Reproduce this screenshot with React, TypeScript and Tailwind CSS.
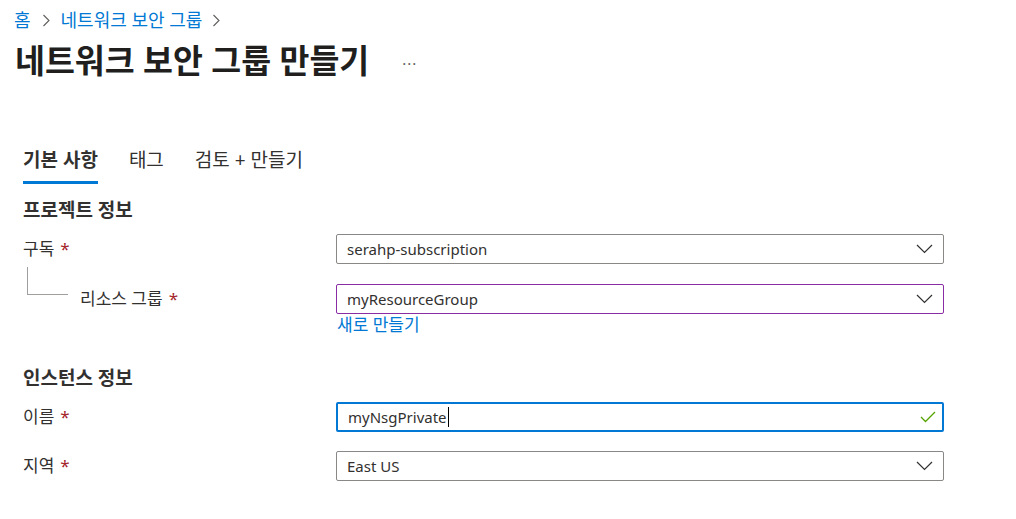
import React from "react";

const font = { fontFamily: '"Segoe UI", "Noto Sans", "Noto Sans CJK KR", sans-serif' };

function ChevronDown() {
  return (
    <svg width="17" height="10" viewBox="0 0 17 10" fill="none" className="shrink-0">
      <path d="M1 1 L8.5 8.5 L16 1" stroke="#323130" strokeWidth="1.2" />
    </svg>
  );
}

function ChevronRight() {
  return (
    <svg width="8" height="13" viewBox="0 0 8 13" fill="none" className="shrink-0">
      <path d="M1.5 1 L7 6.5 L1.5 12" stroke="#605e5c" strokeWidth="1.1" />
    </svg>
  );
}

function Check() {
  return (
    <svg width="16" height="12" viewBox="0 0 16 12" fill="none" className="shrink-0">
      <path d="M1 6 L5.5 10.5 L15 1" stroke="#57a300" strokeWidth="1.3" />
    </svg>
  );
}

function Required() {
  return <span className="ml-[6px] text-[#a4262c]">*</span>;
}

function Field({
  value,
  variant = "default",
  icon = "chevron",
}: {
  value: string;
  variant?: "default" | "purple" | "focus";
  icon?: "chevron" | "check";
}) {
  const border =
    variant === "purple"
      ? "border border-[#8a2da5]"
      : variant === "focus"
      ? "border-2 border-[#0078d4]"
      : "border border-[#8a8886]";
  return (
    <div
      className={`flex h-[30px] w-[608px] items-center justify-between rounded-[2px] bg-white ${border} ${
        variant === "focus" ? "pl-[10px] pr-[6px]" : "pl-[10px] pr-[10px]"
      }`}
    >
      <span className="flex items-center text-[15px] leading-[20px] text-[#323130]">
        {value}
        {variant === "focus" && <span className="ml-px inline-block h-[20px] w-px bg-black" />}
      </span>
      {icon === "chevron" ? <ChevronDown /> : <Check />}
    </div>
  );
}

export default function App() {
  return (
    <div className="min-h-screen w-[1016px] bg-white text-[#323130]" style={font}>
      {/* breadcrumb */}
      <div className="mt-[8px] flex h-[24px] items-center px-[14px] text-[18px] leading-[24px] text-[#0078d4]">
        <span>홈</span>
        <span className="mx-[11px]">
          <ChevronRight />
        </span>
        <span>네트워크 보안 그룹</span>
        <span className="ml-[10px]">
          <ChevronRight />
        </span>
      </div>

      {/* title */}
      <div className="mt-[9px] flex h-[40px] items-center px-[15px]">
        <h1 className="text-[32.5px] font-bold leading-[40px] text-[#201f1e]">네트워크 보안 그룹 만들기</h1>
        <span className="ml-[33px] mt-[4px] text-[15px] tracking-[1px] text-[#605e5c]">···</span>
      </div>

      {/* tabs */}
      <div className="mt-[65px] flex gap-[31px] px-[23px] text-[19px] leading-[28px]">
        <div className="flex flex-col">
          <span className="font-semibold text-[#323130]">기본 사항</span>
          <div className="mt-[7px] h-[3px] bg-[#0078d4]" />
        </div>
        <span>태그</span>
        <span>검토 + 만들기</span>
      </div>

      <div className="px-[23px]">
        <h2 className="mt-[13px] text-[19px] font-bold leading-[26px] text-[#323130]">프로젝트 정보</h2>

        <div className="mt-[11px] flex items-center">
          <div className="w-[313px] text-[17px]">
            구독
            <Required />
          </div>
          <Field value="serahp-subscription" />
        </div>

        <div className="mt-[20px] flex items-start">
          <div className="relative flex h-[30px] w-[313px] items-center pl-[57px] text-[17px]">
            <div className="absolute left-[4px] top-[-17px] h-[28px] w-[41px] border-b border-l border-[#a19f9d]" />
            리소스 그룹
            <Required />
          </div>
          <div className="flex flex-col">
            <Field value="myResourceGroup" variant="purple" />
            <span className="pl-px text-[17px] leading-[22px] text-[#0078d4]">새로 만들기</span>
          </div>
        </div>

        <h2 className="mt-[29px] text-[19px] font-bold leading-[26px]">인스턴스 정보</h2>

        <div className="mt-[11px] flex items-center">
          <div className="w-[313px] text-[17px]">
            이름
            <Required />
          </div>
          <Field value="myNsgPrivate" variant="focus" icon="check" />
        </div>

        <div className="mt-[19px] flex items-center">
          <div className="w-[313px] text-[17px]">
            지역
            <Required />
          </div>
          <Field value="East US" />
        </div>
      </div>
    </div>
  );
}
